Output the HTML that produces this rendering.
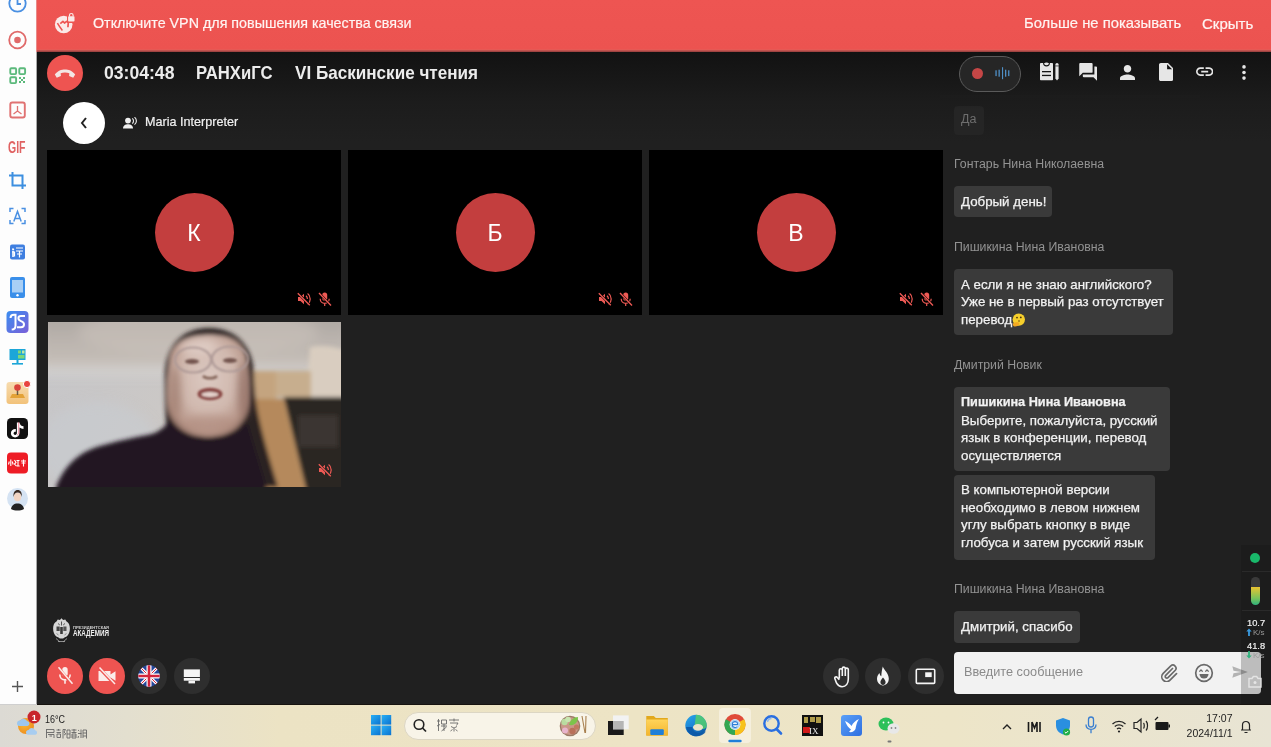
<!DOCTYPE html>
<html><head><meta charset="utf-8">
<style>
*{margin:0;padding:0;box-sizing:border-box}
html,body{width:1271px;height:747px;overflow:hidden;background:#1e1e1e;font-family:"Liberation Sans",sans-serif;-webkit-font-smoothing:antialiased}
body{will-change:transform}
.a{position:absolute}
#side{left:0;top:0;width:37px;height:704px;background:#fdfdfd;border-right:1px solid #a8a8a8}
#banner{left:37px;top:0;width:1234px;height:52px;background:linear-gradient(#ee5552 0,#ec5350 49px,#e0605a 50px,#a04442 51px,#a04442 52px);color:#fff4f2;box-shadow:0 1px 0 #1e0a0a}
#hdr{left:37px;top:52px;width:1234px;height:99px;background:linear-gradient(#121212 0px,#161616 20px,#1c1c1c 50px,#202020 90px)}
#main{left:37px;top:151px;width:1234px;height:553px;background:#202020}
#task{left:0;top:704px;width:1271px;height:43px;background:linear-gradient(90deg,#dcdad4 0%,#e3dfcf 10%,#ece3c4 22%,#ede4c5 50%,#ede5c8 75%,#e8e4d4 100%);border-top:1px solid #17130f}
#tline{left:0;top:704px;width:37px;height:1px;background:#cfcfcf}
.tile{background:#000}
.av{width:79px;height:79px;border-radius:50%;background:#c33e3e;color:#fff;font-size:23px;text-align:center;line-height:81px}
.btn{width:36px;height:36px;border-radius:50%}
.red{background:#ee5451}
.gr{background:#2e2e2e}
.nm{font-size:12.3px;color:#939393;white-space:nowrap}
.bub{background:#3a3a3a;border-radius:4px;color:#f2f2f2;font-size:13.3px;line-height:17.5px;-webkit-text-stroke:0.25px #f2f2f2}
</style></head><body>
<div id="side" class="a"></div>
<svg class="a" style="left:0;top:0" width="37" height="705" viewBox="0 0 37 705">
<g fill="none" stroke-width="1.8">
<circle cx="17.5" cy="3.5" r="8.2" stroke="#4a90e2"/><path d="M17.5 -1v5h3.5" stroke="#4a90e2"/>
<circle cx="17.5" cy="40" r="8.3" stroke="#e06a6a"/>
</g>
<circle cx="17.5" cy="40" r="3.3" fill="#e06a6a"/>
<g fill="none" stroke="#5bb97b" stroke-width="1.9"><rect x="10.3" y="68.3" width="5.8" height="5.8" rx="1"/><rect x="19.3" y="68.3" width="5.8" height="5.8" rx="1"/><rect x="10.3" y="77.3" width="5.8" height="5.8" rx="1"/></g>
<g fill="#5bb97b"><rect x="19" y="77" width="2" height="2"/><rect x="23" y="77" width="2" height="2"/><rect x="21" y="79" width="2" height="2"/><rect x="19" y="81" width="2" height="2"/><rect x="23" y="81" width="2" height="2"/></g>
<rect x="10.3" y="102.5" width="14.5" height="15" rx="2" fill="none" stroke="#e07272" stroke-width="1.9"/>
<path d="M17.5 106v5M17.5 111l-4 3M17.5 111l4 3" stroke="#e07272" stroke-width="1.3" fill="none"/>
<text x="8" y="152.5" font-family="Liberation Sans" font-weight="700" font-size="16.8" fill="#e06262" textLength="17.5" lengthAdjust="spacingAndGlyphs">GIF</text>
<path d="M12.5 172v13.5H26M9 175.5h13.5V189" stroke="#3d8fe0" stroke-width="2" fill="none"/>
<path d="M10 212v-3.5h3.5M21.5 208.5H25v3.5M25 220v3.5h-3.5M13.5 223.5H10V220" stroke="#4a90e2" stroke-width="1.5" fill="none"/>
<path d="M13.8 221.5l3.7-10 3.7 10M15 218.5h5" stroke="#4a90e2" stroke-width="1.5" fill="none"/>
<rect x="10" y="244.5" width="15" height="15" rx="2" fill="#3f7fe0"/>
<text x="11.5" y="257" font-family="Liberation Sans" font-weight="700" font-size="11" fill="#fff">i</text>
<path d="M12.5 248.5l1.5 1.2M12 252h2.5v4.5M16 248h7M16 251h7M17 254h5M19.5 251v6.5" stroke="#fff" stroke-width="1.2" fill="none"/>
<rect x="10" y="277" width="15" height="21" rx="2" fill="#3a8fea"/>
<rect x="12" y="280" width="11" height="12.5" fill="#a9cff5"/>
<circle cx="17.5" cy="295.3" r="1.2" fill="#fff"/>
<defs><linearGradient id="jsg" x1="0" y1="0" x2="1" y2="1"><stop offset="0" stop-color="#3a8ef0"/><stop offset="1" stop-color="#7b5fd8"/></linearGradient>
<linearGradient id="joy" x1="0" y1="0" x2="0" y2="1"><stop offset="0" stop-color="#f7dcb0"/><stop offset="1" stop-color="#f2c27a"/></linearGradient></defs>
<rect x="6.5" y="311" width="22" height="22" rx="4" fill="url(#jsg)"/>
<path d="M10.5 318c0-2 1.6-3.3 3.5-3.3h1.5v11c0 2.4-1.5 3.8-3.8 3.8M25 316h-4c-1.7 0-2.6 1-2.6 2.3 0 1.5 1 2.2 2.6 2.8 1.8 0.7 3 1.6 3 3.2 0 1.6-1.2 3-3 3H17" stroke="#fff" stroke-width="2" fill="none"/>
<rect x="9.5" y="349" width="16" height="11" fill="#1ca6d8"/>
<rect x="18" y="350.5" width="3" height="3" fill="#7dd87a"/><rect x="22" y="350.5" width="2.5" height="3" fill="#bfe8a0"/><rect x="18" y="355" width="6.5" height="3.5" fill="#7dd87a"/>
<rect x="16.5" y="360" width="2" height="3" fill="#1ca6d8"/><rect x="12" y="363" width="11" height="1.6" fill="#1ca6d8"/>
<rect x="6.5" y="382" width="22" height="22" rx="3" fill="url(#joy)"/>
<path d="M10 398l2-4h11l2 4z" fill="#e3a237"/>
<path d="M17.5 388v7" stroke="#6a5a45" stroke-width="1.5"/>
<circle cx="17.5" cy="387.5" r="3.3" fill="#d9433a"/>
<circle cx="27" cy="384" r="3.6" fill="#e8433f" stroke="#fff" stroke-width="1"/>
<rect x="7" y="418" width="21" height="21" rx="4.5" fill="#111"/>
<path d="M19.5 422.5c0.4 2.3 1.8 3.6 4 3.8v2.6c-1.5 0-2.8-0.4-4-1.3v5.5c0 2.7-2.1 4.4-4.4 4.4s-4.2-1.9-4.2-4.2c0-2.6 2.2-4.5 4.9-4.2v2.7c-1.2-0.3-2.2 0.5-2.2 1.5 0 0.9 0.7 1.6 1.6 1.6 1 0 1.7-0.7 1.7-1.8v-10.6z" fill="#fff"/>
<path d="M18.7 422.2v10.8c0 1.1-0.7 1.8-1.7 1.8" stroke="#e8345a" stroke-width="0.8" fill="none" opacity="0.7"/>
<rect x="7" y="452.5" width="21" height="21" rx="4" fill="#ee1c25"/>
<g stroke="#fff" stroke-width="1.1" fill="none"><path d="M10.8 459.5v6.5M9.3 461.5l-0.8 3M12.3 461.5l0.8 3M14.5 460l1.5 2.5-1.5 1.5 1.8 2M16.5 460.5h3M18 460.5v5.5M16.5 466h3.2M21 461h5M23.5 459.5v7M21.5 463h4"/></g>
<circle cx="17.5" cy="498.5" r="10.5" fill="#d5e3f3"/>
<path d="M11 509c0.5-3.5 3-5.5 6.5-5.5s6 2 6.5 5.5c-2 1.2-4 1.6-6.5 1.6s-4.5-0.4-6.5-1.6z" fill="#222"/>
<ellipse cx="17.5" cy="497" rx="3.6" ry="4.3" fill="#f2d4c2"/>
<path d="M13.5 497c-0.5-4.5 1.5-7 4.2-7s4.7 2.3 4 7c-0.4-2.5-1.5-4.5-4-4.5s-3.8 2-4.2 4.5z" fill="#3a2a22"/>
<path d="M12 686.5h11M17.5 681v11" stroke="#555" stroke-width="1.4"/>
</svg>
<div class="a" style="left:36px;top:0;width:1px;height:52px;background:#e88a88"></div>
<div id="banner" class="a">
<svg class="a" style="left:17px;top:12px" width="22" height="22" viewBox="0 0 22 22">
<circle cx="9.7" cy="12.5" r="8.8" fill="#fbeae8"/>
<path d="M6.3 11.6l2.6-2.2 1.6 1.6 2.2-1.6 1.6 1.2-0.4 4.6" stroke="#ee5451" stroke-width="1.7" fill="none" stroke-linejoin="round"/>
<path d="M3.4 11.2c1.4 2.4 3 4.8 5 7.2" stroke="#ee5451" stroke-width="1.5" fill="none"/>
<rect x="13" y="0" width="9" height="11" fill="#ee5451"/>
<rect x="14.1" y="4.2" width="6.4" height="5.3" rx="0.8" fill="#fbeae8"/>
<path d="M15.5 4.6V3.3a1.8 1.8 0 0 1 3.6 0v1.3" stroke="#fbeae8" stroke-width="1.2" fill="none"/>
</svg>
<div class="a" style="left:56px;top:15px;font-size:14.3px;white-space:nowrap;-webkit-text-stroke:0.2px #fff4f2">Отключите VPN для повышения качества связи</div>
<div class="a" style="left:987px;top:15px;font-size:14.8px;white-space:nowrap;-webkit-text-stroke:0.2px #fff4f2">Больше не показывать</div>
<div class="a" style="left:1165px;top:15px;font-size:15px;white-space:nowrap;-webkit-text-stroke:0.2px #fff4f2">Скрыть</div>
</div>
<div id="hdr" class="a"></div>
<div class="a" style="left:104px;top:63px;font-size:17.6px;font-weight:700;color:#ececec;white-space:nowrap">03:04:48</div>
<div class="a" style="left:196px;top:63px;font-size:16.7px;transform-origin:0 0;transform:scaleY(1.06);font-weight:700;color:#ececec;white-space:nowrap">РАНХиГС</div>
<div class="a" style="left:295px;top:63px;font-size:17.1px;transform-origin:0 0;transform:scaleY(1.04);font-weight:700;color:#ececec;white-space:nowrap">VI Баскинские чтения</div>

<div id="main" class="a"></div>
<div id="task" class="a"></div><div id="tline" class="a"></div>
<svg class="a" style="left:0;top:705px" width="1271" height="42" viewBox="0 0 1271 42">
<defs>
<radialGradient id="sun" cx="0.4" cy="0.4" r="0.7"><stop offset="0" stop-color="#f7b733"/><stop offset="1" stop-color="#ee8a1e"/></radialGradient>
<linearGradient id="win" x1="0" y1="0" x2="1" y2="1"><stop offset="0" stop-color="#2ab0f5"/><stop offset="1" stop-color="#0a72d0"/></linearGradient>
<linearGradient id="fold" x1="0" y1="0" x2="0" y2="1"><stop offset="0" stop-color="#ffd45a"/><stop offset="1" stop-color="#f3b52e"/></linearGradient>
<linearGradient id="edge" x1="0" y1="0" x2="0.6" y2="1"><stop offset="0" stop-color="#2aa8e8"/><stop offset="0.6" stop-color="#1a7fd4"/><stop offset="1" stop-color="#0c59a4"/></linearGradient>
<linearGradient id="bird" x1="0" y1="0" x2="1" y2="1"><stop offset="0" stop-color="#5aa0f8"/><stop offset="1" stop-color="#2f6fe0"/></linearGradient>
</defs>
<!-- weather -->
<circle cx="26" cy="21" r="8" fill="url(#sun)"/>
<path d="M17 18.5a3 3 0 0 1 3-3 4 4 0 0 1 7 0.5 2.6 2.6 0 0 1 0.5 5.1H19a2.4 2.4 0 0 1-2-2.6z" fill="#9cc7ee"/>
<path d="M26 27.5a2.6 2.6 0 0 1 2.6-2.6 3.6 3.6 0 0 1 6.5 0.4 2.3 2.3 0 0 1 0.3 4.5H28a2.2 2.2 0 0 1-2-2.3z" fill="#a8cdf0"/>
<circle cx="34" cy="12" r="6.5" fill="#c8262c"/>
<text x="31.8" y="15.8" font-family="Liberation Sans" font-weight="700" font-size="9" fill="#fff">1</text>
<text x="45" y="18" font-family="Liberation Sans" font-size="10.5" fill="#1e1e1e" textLength="20" lengthAdjust="spacingAndGlyphs">16°C</text>
<g stroke="#666" stroke-width="0.9" fill="none">
<path d="M46 24.5h8v3h-7.5M46.5 24.5v8.5M48 29.5h6v3.5M49.5 31h2.5"/>
<path d="M56.5 25h4M58.5 24v1.5M56.5 27.5h4.5M57 29h3.5v3.5H57zM63 24.5v9M63 24.5h2.5l-1.5 2.5 1.8 2-1.8 1"/>
<path d="M67 25h3v8h-3zM67 29h3M71.5 25h5M74 24v3.5M71.5 27.5h5M72 29h4v4h-4zM72 31h4"/>
<path d="M78 25l1.2 1M81 24.5v8.5M78 28.5h3.5M78.5 31l-0.5 2M83 25h3.5v8.5M83 28h3.5M83 31h3.5M83 25v8"/>
</g>
<!-- start -->
<g fill="url(#win)"><rect x="371" y="10" width="9.6" height="9.6"/><rect x="381.6" y="10" width="9.6" height="9.6"/><rect x="371" y="20.6" width="9.6" height="9.6"/><rect x="381.6" y="20.6" width="9.6" height="9.6"/></g>
<!-- search -->
<rect x="404.5" y="7.5" width="191" height="27" rx="13.5" fill="#f8f4e8" stroke="#dcd6c4" stroke-width="1"/>
<circle cx="419" cy="19.5" r="4.8" fill="none" stroke="#222" stroke-width="1.6"/><path d="M422.5 23l3.5 3.5" stroke="#222" stroke-width="1.7"/>
<g stroke="#6a6a6a" stroke-width="0.9" fill="none"><path d="M437 16h3M438.5 14v12M437 21l3-1.5M441.5 15h5v4h-5zM441 21h6M444 19v7M441.5 26l5-4"/><path d="M449 15h10M454 13.5v3M450 18h8l-1.5 2.5M451 21.5l3 1.5 3-1.5M454 23v3.5M450.5 26l2-1.5M457.5 26l-2-1.5"/></g>
<circle cx="570" cy="21" r="10.3" fill="#9a7a66"/><circle cx="570" cy="21" r="9" fill="#c99888"/>
<circle cx="564.5" cy="17" r="3.2" fill="#b9dca0"/><circle cx="568" cy="14.5" r="2.8" fill="#c8e6b0"/><path d="M569 20c1-5 5-8 9-8 0 5-3 9-9 8z" fill="#7cc44a"/>
<circle cx="565" cy="25.5" r="3" fill="#e8b4cc"/><circle cx="572.5" cy="26" r="3.2" fill="#b8705a"/><circle cx="576.5" cy="22" r="2.6" fill="#c07a60"/>
<path d="M582 11l3 17M586 11l-0.5 17" stroke="#a88050" stroke-width="1.1"/>
<!-- task view -->
<rect x="608" y="16" width="15.7" height="14" fill="#1a1a1a"/><rect x="613" y="10.4" width="15.7" height="13.9" fill="#f2f2f2"/><rect x="613" y="16" width="10.7" height="8.3" fill="#b5b5b5"/>
<!-- explorer -->
<path d="M646.3 11h7.5l2 2h12v17.6h-21.5z" fill="#e2a81c"/><rect x="646.3" y="14.5" width="21.5" height="16.1" fill="url(#fold)"/><rect x="650.3" y="24.3" width="13.5" height="5.6" rx="1" fill="#1f7fd8"/>
<!-- edge -->
<circle cx="696" cy="20.5" r="10.7" fill="url(#edge)"/>
<path d="M696 9.8a10.7 10.7 0 0 1 10.7 10.7c0 2.5-2 3.6-4.6 3.6h-8" fill="#53cf6c" opacity="0.85"/>
<ellipse cx="698" cy="22.3" rx="5" ry="3.4" fill="#ece4c8"/>
<path d="M686 22c1 6 5.5 9.3 10.5 9.3 4 0 7.5-1.8 9.6-5-2.5 1.5-5 2-7.5 1.6-3.5-0.5-6-2.5-6.5-6" fill="#0c58a6" opacity="0.9"/>
<!-- chrome highlight -->
<rect x="719" y="3" width="32" height="35" rx="4" fill="#f6f1e1" opacity="0.85"/>
<rect x="728.3" y="34.8" width="13.4" height="2.4" rx="1.2" fill="#1f7fd8"/>
<circle cx="735" cy="19.5" r="10.5" fill="#e04a3a"/>
<path d="M735 19.5L725.9 14.2A10.5 10.5 0 0 0 735 30z" fill="#33a852"/>
<path d="M735 19.5V30a10.5 10.5 0 0 0 9.1-15.8z" fill="#f7c21a"/>
<circle cx="735" cy="19.5" r="5.4" fill="#fff"/><circle cx="735" cy="19.5" r="4.4" fill="#eaf3fc" stroke="#6fb0ea" stroke-width="0.8"/><path d="M732.2 19.6h5.6c0-1.8-1.2-3-2.8-3s-2.8 1.3-2.8 3 1.2 3 2.8 3c1 0 1.8-0.4 2.4-1.1" stroke="#2f7fd8" stroke-width="1.1" fill="none"/>
<!-- search blue -->
<circle cx="771.5" cy="18.5" r="7.2" fill="none" stroke="#2a6fe0" stroke-width="2.4"/><path d="M776.5 24l4.5 4.5" stroke="#2a6fe0" stroke-width="2.6" stroke-linecap="round"/>
<path d="M767.5 17a4.2 4.2 0 0 1 4-3.5" stroke="#8fb8f0" stroke-width="1.4" fill="none"/>
<!-- game -->
<rect x="802" y="10" width="21" height="21" fill="#111"/><rect x="803" y="22" width="7" height="6" fill="#d21a1a"/><text x="809" y="29" font-family="Liberation Serif" font-size="9" fill="#eee">IX</text><path d="M804 12h4v6h-4zM810 12h5v5h-5zM816 12h5v6h-5z" fill="#d8c05a" opacity="0.8"/>
<!-- bird -->
<rect x="841" y="10" width="21" height="21" rx="3" fill="url(#bird)"/><path d="M845 16c3 1 5 3 6.5 5 1.5-3 4-5.5 7.5-7-2 3-3 6.5-3.5 10-1 2.5-3.5 3.5-6.5 3l2-2.5c-2.5-1.5-4.5-4.5-6-8.5z" fill="#fff"/>
<!-- wechat -->
<ellipse cx="886" cy="19" rx="7.5" ry="6.5" fill="#2dc05a"/><ellipse cx="893.5" cy="23.5" rx="6" ry="5.2" fill="#e8e8e8"/><circle cx="891.5" cy="23" r="0.9" fill="#888"/><circle cx="895.5" cy="23" r="0.9" fill="#888"/><circle cx="883.5" cy="17.5" r="0.9" fill="#fff"/><circle cx="888.5" cy="17.5" r="0.9" fill="#fff"/>
<rect x="887.5" y="35.5" width="4" height="2" rx="1" fill="#777"/>
<!-- tray -->
<path d="M1003 24l4-4 4 4" stroke="#222" stroke-width="1.4" fill="none"/>
<path d="M1028.5 17v10M1032 17l2.5 6 2.5-6M1032 17v10M1037 17v10M1040 17v10" stroke="#1a1a1a" stroke-width="1.6" fill="none"/>
<path d="M1063 13l7 2.5v5c0 4.5-3 7.5-7 9-4-1.5-7-4.5-7-9v-5z" fill="#2a8fe0"/><circle cx="1066.5" cy="27" r="3.6" fill="#1fae4a"/><path d="M1064.8 27l1.2 1.2 2.2-2.2" stroke="#fff" stroke-width="1" fill="none"/>
<rect x="1088.5" y="12" width="5" height="10" rx="2.5" fill="none" stroke="#3a7fd0" stroke-width="1.3"/><path d="M1086 19.5c0 3 2.2 4.8 5 4.8s5-1.8 5-4.8M1091 24.3v4" stroke="#3a7fd0" stroke-width="1.3" fill="none"/>
<path d="M1112.5 19a9.5 9.5 0 0 1 13 0M1114.8 21.5a6.2 6.2 0 0 1 8.4 0M1117 24a3 3 0 0 1 4 0" stroke="#222" stroke-width="1.3" fill="none"/><circle cx="1119" cy="26.5" r="1.1" fill="#222"/>
<path d="M1134 17.5h3l4-3.5v13l-4-3.5h-3z" fill="none" stroke="#222" stroke-width="1.2"/><path d="M1143.5 18c1 1 1 4.5 0 5.5M1146 16c2 2 2 7.5 0 9.5" stroke="#222" stroke-width="1.2" fill="none"/>
<rect x="1155.5" y="17" width="13" height="8" rx="1" fill="#1a1a1a"/><rect x="1168.5" y="19.5" width="1.5" height="3" fill="#1a1a1a"/><path d="M1155 15l3-3" stroke="#1a1a1a" stroke-width="1.3"/>
<text x="1232.5" y="16.5" font-family="Liberation Sans" font-size="10.5" fill="#222" text-anchor="end">17:07</text>
<text x="1232.5" y="31.5" font-family="Liberation Sans" font-size="10.5" fill="#222" text-anchor="end">2024/11/1</text>
<path d="M1241 25h10M1242.5 25v-5a3.5 3.5 0 0 1 7 0v5M1244.5 27.5h3" stroke="#222" stroke-width="1.2" fill="none"/>
</svg>

<!-- header right -->
<div class="a" style="left:959px;top:56px;width:62px;height:36px;border-radius:18px;background:#262626;border:1px solid #5a5a5a"></div>
<div class="a" style="left:972px;top:68px;width:11px;height:11px;border-radius:50%;background:#c54646"></div>
<svg class="a" style="left:995px;top:67px" width="15" height="13" viewBox="0 0 15 13"><g fill="#4f8fc6"><rect x="0.4" y="3.3" width="1.3" height="5.8"/><rect x="3.5" y="2.7" width="1.3" height="7"/><rect x="7" y="0.2" width="1.1" height="12"/><rect x="10" y="2.7" width="1.3" height="7"/><rect x="13.1" y="3.3" width="1.3" height="5.8"/></g></svg>
<svg class="a" style="left:1039px;top:62px" width="21" height="20" viewBox="0 0 21 20"><rect x="1" y="1" width="13" height="17.2" rx="0.8" fill="#e6e6e6"/><path d="M4.6 1a2.9 2.9 0 0 0 5.8 0" stroke="#161616" stroke-width="1.1" fill="none"/><ellipse cx="7.5" cy="1.6" rx="1.9" ry="1.2" fill="#e6e6e6"/><rect x="3" y="9" width="9" height="1.3" fill="#161616"/><rect x="3" y="12.8" width="9" height="1.3" fill="#161616"/><path d="M16.4 2.6a1.6 1.6 0 0 1 3.2 0v13.8L18 18.4l-1.6-2z" fill="#e6e6e6"/><rect x="16.2" y="3.6" width="3.6" height="0.7" fill="#161616"/></svg>
<svg class="a" style="left:1079px;top:63px" width="18.3" height="17.8" viewBox="2 2 20 20"><path d="M21 6h-2v9H6v2c0 .55.45 1 1 1h11l4 4V7c0-.55-.45-1-1-1zm-4 6V3c0-.55-.45-1-1-1H3c-.55 0-1 .45-1 1v14l4-4h10c.55 0 1-.45 1-1z" fill="#e6e6e6"/></svg>
<svg class="a" style="left:1119.5px;top:64.5px" width="15" height="15" viewBox="4 4 16 16"><path d="M12 12c2.21 0 4-1.790 4-4s-1.79-4-4-4-4 1.79-4 4 1.79 4 4 4zm0 2c-2.67 0-8 1.34-8 4v2h16v-2c0-2.66-5.33-4-8-4z" fill="#e6e6e6"/></svg>
<svg class="a" style="left:1159px;top:63px" width="14.4" height="18" viewBox="4 2 16 20"><path d="M6 2c-1.1 0-1.99.9-1.99 2L4 20c0 1.1.89 2 1.99 2H18c1.1 0 2-.9 2-2V8l-6-6H6zm7 7V3.5L18.5 9H13z" fill="#e6e6e6"/></svg>
<svg class="a" style="left:1196px;top:67.4px" width="17.4" height="9.2" viewBox="2 7 20 10"><path d="M3.9 12c0-1.71 1.39-3.1 3.1-3.1h4V7H7c-2.76 0-5 2.240-5 5s2.24 5 5 5h4v-1.9H7c-1.71 0-3.1-1.39-3.1-3.1zM8 13h8v-2H8v2zm9-6h-4v1.9h4c1.71 0 3.1 1.39 3.1 3.1s-1.39 3.1-3.1 3.1h-4V17h4c2.76 0 5-2.24 5-5s-2.24-5-5-5z" fill="#e6e6e6"/></svg>
<svg class="a" style="left:1240.5px;top:64.5px" width="6" height="15" viewBox="0 0 6 15"><circle cx="3" cy="1.9" r="1.8" fill="#e6e6e6"/><circle cx="3" cy="7.5" r="1.8" fill="#e6e6e6"/><circle cx="3" cy="13.1" r="1.8" fill="#e6e6e6"/></svg>
<!-- tiles -->
<div class="a tile" style="left:47px;top:150px;width:294px;height:165px"></div>
<div class="a tile" style="left:348px;top:150px;width:294px;height:165px"></div>
<div class="a tile" style="left:649px;top:150px;width:294px;height:165px"></div>
<svg class="a" style="left:48px;top:322px" width="293" height="165" viewBox="0 0 293 165">
<defs>
<filter id="bl" x="-20%" y="-20%" width="140%" height="140%"><feGaussianBlur stdDeviation="2"/></filter>
<filter id="bl4" x="-20%" y="-20%" width="140%" height="140%"><feGaussianBlur stdDeviation="1.1"/></filter>
<filter id="bl3" x="-50%" y="-50%" width="200%" height="200%"><feGaussianBlur stdDeviation="4"/></filter>
<filter id="bl2" x="-20%" y="-20%" width="140%" height="140%"><feGaussianBlur stdDeviation="6"/></filter>
<linearGradient id="ceil" x1="0" y1="0" x2="0" y2="1"><stop offset="0" stop-color="#aaa49f"/><stop offset="0.6" stop-color="#bdb6b0"/><stop offset="1" stop-color="#c6bfb8"/></linearGradient>
<linearGradient id="wall" x1="0" y1="0" x2="1" y2="0.3"><stop offset="0" stop-color="#c6c6c9"/><stop offset="0.5" stop-color="#cbc8c6"/><stop offset="1" stop-color="#bcb6b0"/></linearGradient>
<radialGradient id="face" cx="0.5" cy="0.42" r="0.62"><stop offset="0" stop-color="#dcc9c1"/><stop offset="0.55" stop-color="#d0b8ae"/><stop offset="0.85" stop-color="#b8978a"/><stop offset="1" stop-color="#8a6a5e"/></radialGradient>
</defs>
<rect width="293" height="165" fill="url(#wall)"/>
<g filter="url(#bl2)">
<rect x="-10" y="-10" width="313" height="55" fill="url(#ceil)"/>
<ellipse cx="150" cy="10" rx="120" ry="25" fill="#c9c2bb" opacity="0.6"/>
<rect x="-10" y="45" width="313" height="7" fill="#dad8d6" opacity="0.8"/>
<ellipse cx="50" cy="125" rx="60" ry="45" fill="#c8cbd0" opacity="0.6"/>
</g>
<g filter="url(#bl)">
<path d="M262 25c10-2 22-1 30 2l10 0v48h-44z" fill="#d9cdc0"/>
<path d="M227 49h36v26h-36z" fill="#c7ae8e"/>
<path d="M198 49h30v28h-30z" fill="#c4a47f"/>
<path d="M198 77h38l24 98h-62z" fill="#b5895b"/>
<path d="M236 75h67v100h-43l-24-99z" fill="#2b2623"/>
<path d="M250 93h40v32h-40z" fill="#3a3633"/>
<path d="M117 60c-2-32 14-54 44-54 30 0 46 22 45 52 1 30 10 60 24 107h-28l-20-30-62-10c-2-20-3-40-3-65z" fill="#2c2321"/>
<path d="M162 13c-22 0-38 8-40 24-2 14-3 32-2 46 1 12 6 20 14 25 8 5 17 7 26 7s18-2 26-7c8-5 13-13 14-25 1-14 0-32-2-46-2-16-14-24-36-24z" fill="url(#face)"/>
<path d="M8 175v-10c8-20 22-36 48-42 18-5 32-8 44-10 10-2 16-7 22-15 6 10 18 19 39 19 18 0 30-8 38-16 6 22 14 46 22 75z" fill="#201720"/>
</g>
<g filter="url(#bl3)">
<ellipse cx="127" cy="70" rx="6" ry="26" fill="#9c7a6c" opacity="0.7"/>
<ellipse cx="196" cy="68" rx="6" ry="28" fill="#8c6a5e" opacity="0.7"/>
<ellipse cx="162" cy="102" rx="26" ry="9" fill="#b08c7e" opacity="0.6"/>
<ellipse cx="150" cy="25" rx="18" ry="8" fill="#e6d6cf" opacity="0.6"/>
</g>
<g filter="url(#bl4)" opacity="0.95">
<ellipse cx="145" cy="38" rx="18" ry="12.5" fill="none" stroke="#ad9996" stroke-width="2.2"/>
<ellipse cx="182" cy="37" rx="18" ry="12.5" fill="none" stroke="#ad9996" stroke-width="2.2"/>
<path d="M163 36h1" stroke="#ad9996" stroke-width="3"/>
<ellipse cx="144" cy="39.5" rx="7" ry="2.6" fill="#6e5049"/>
<ellipse cx="182" cy="38.5" rx="7" ry="2.6" fill="#6e5049"/>
<path d="M155 54c3 3 11 3 14 0" stroke="#7f5e53" stroke-width="2.6" fill="none"/>
<ellipse cx="162" cy="72" rx="12.5" ry="6.2" fill="#86423f"/>
<ellipse cx="162" cy="72.5" rx="8.5" ry="2.4" fill="#e6d3cd"/>

</g>
</svg>
<svg class="a" style="left:318px;top:463px" width="14" height="15" viewBox="0 0 14 15"><path d="M1 5h2.5L7 1.8v10.4L3.5 9H1z" fill="#ef5a55"/><path d="M9 3.8c1 0.8 1.4 1.9 1.4 3.2M10.6 1.6c1.8 1.3 2.6 3.2 2.6 5.4s-0.8 4.1-2.6 5.4" stroke="#ef5a55" stroke-width="1.2" fill="none"/><path d="M0.8 1.2l12 12" stroke="#2a2522" stroke-width="2.4"/><path d="M0.8 1.2l12 12" stroke="#ef5a55" stroke-width="1.3"/></svg>

<div class="a av" style="left:154.5px;top:193px">К</div>
<div class="a av" style="left:455.5px;top:193px">Б</div>
<div class="a av" style="left:756.5px;top:193px">В</div>

<svg class="a" style="left:297px;top:292px" width="14" height="15" viewBox="0 0 14 15"><path d="M1 5h2.5L7 1.8v10.4L3.5 9H1z" fill="#ef5a55"/><path d="M9 3.8c1 0.8 1.4 1.9 1.4 3.2M10.6 1.6c1.8 1.3 2.6 3.2 2.6 5.4s-0.8 4.1-2.6 5.4" stroke="#ef5a55" stroke-width="1.2" fill="none"/><path d="M0.8 1.2l12 12" stroke="#000" stroke-width="2.4"/><path d="M0.8 1.2l12 12" stroke="#ef5a55" stroke-width="1.3"/></svg><svg class="a" style="left:318px;top:292px" width="14" height="15" viewBox="0 0 14 15"><rect x="4.2" y="0.6" width="5" height="8.2" rx="2.5" fill="#ef5a55"/><path d="M2.2 6.8c0 2.7 2 4.6 4.5 4.6s4.5-1.9 4.5-4.6M6.7 11.4v2.5" stroke="#ef5a55" stroke-width="1.2" fill="none"/><path d="M1 1l12 12.5" stroke="#000" stroke-width="2.4"/><path d="M1 1l12 12.5" stroke="#ef5a55" stroke-width="1.3"/></svg>
<svg class="a" style="left:598px;top:292px" width="14" height="15" viewBox="0 0 14 15"><path d="M1 5h2.5L7 1.8v10.4L3.5 9H1z" fill="#ef5a55"/><path d="M9 3.8c1 0.8 1.4 1.9 1.4 3.2M10.6 1.6c1.8 1.3 2.6 3.2 2.6 5.4s-0.8 4.1-2.6 5.4" stroke="#ef5a55" stroke-width="1.2" fill="none"/><path d="M0.8 1.2l12 12" stroke="#000" stroke-width="2.4"/><path d="M0.8 1.2l12 12" stroke="#ef5a55" stroke-width="1.3"/></svg><svg class="a" style="left:619px;top:292px" width="14" height="15" viewBox="0 0 14 15"><rect x="4.2" y="0.6" width="5" height="8.2" rx="2.5" fill="#ef5a55"/><path d="M2.2 6.8c0 2.7 2 4.6 4.5 4.6s4.5-1.9 4.5-4.6M6.7 11.4v2.5" stroke="#ef5a55" stroke-width="1.2" fill="none"/><path d="M1 1l12 12.5" stroke="#000" stroke-width="2.4"/><path d="M1 1l12 12.5" stroke="#ef5a55" stroke-width="1.3"/></svg>
<svg class="a" style="left:899px;top:292px" width="14" height="15" viewBox="0 0 14 15"><path d="M1 5h2.5L7 1.8v10.4L3.5 9H1z" fill="#ef5a55"/><path d="M9 3.8c1 0.8 1.4 1.9 1.4 3.2M10.6 1.6c1.8 1.3 2.6 3.2 2.6 5.4s-0.8 4.1-2.6 5.4" stroke="#ef5a55" stroke-width="1.2" fill="none"/><path d="M0.8 1.2l12 12" stroke="#000" stroke-width="2.4"/><path d="M0.8 1.2l12 12" stroke="#ef5a55" stroke-width="1.3"/></svg><svg class="a" style="left:920px;top:292px" width="14" height="15" viewBox="0 0 14 15"><rect x="4.2" y="0.6" width="5" height="8.2" rx="2.5" fill="#ef5a55"/><path d="M2.2 6.8c0 2.7 2 4.6 4.5 4.6s4.5-1.9 4.5-4.6M6.7 11.4v2.5" stroke="#ef5a55" stroke-width="1.2" fill="none"/><path d="M1 1l12 12.5" stroke="#000" stroke-width="2.4"/><path d="M1 1l12 12.5" stroke="#ef5a55" stroke-width="1.3"/></svg>
<!-- chat -->
<div class="a bub" style="left:954px;top:106px;width:30px;height:29px;background:#252525"></div>
<div class="a" style="left:961px;top:112px;font-size:12.5px;color:#6e6e6e">Да</div>
<div class="a" style="left:940px;top:95px;width:260px;height:14px;background:linear-gradient(#1c1c1c,rgba(32,32,32,0))"></div>
<div class="a nm" style="left:954px;top:157px">Гонтарь Нина Николаевна</div>
<div class="a bub" style="left:954px;top:186px;width:98px;height:31px;padding:7px 0 0 7px">Добрый день!</div>
<div class="a nm" style="left:954px;top:240px">Пишикина Нина Ивановна</div>
<div class="a bub" style="left:954px;top:269px;width:219px;height:66px;padding:6.5px 0 0 7px">А если я не знаю английского?<br>Уже не в первый раз отсутствует<br>перевод<svg style="vertical-align:-3px" width="13" height="14" viewBox="0 0 13 14"><circle cx="6.8" cy="6.6" r="6.2" fill="#f6cf2c"/><circle cx="5" cy="4.6" r="0.9" fill="#4a3510"/><circle cx="8.8" cy="4.4" r="0.9" fill="#4a3510"/><path d="M6 8h2" stroke="#6a4a10" stroke-width="0.9"/><path d="M1 10.5c1.5-1 3.5-1.5 5-1.2 1.2 0.3 1.8 1.4 1 2.4-1 1.3-3 2-4.5 1.8-1.3-0.2-2-1.8-1.5-3z" fill="#f3a922"/></svg></div>
<div class="a nm" style="left:954px;top:358px">Дмитрий Новик</div>
<div class="a bub" style="left:954px;top:387px;width:216px;height:84px;padding:6px 0 0 7px"><b style="font-size:12.7px">Пишикина Нина Ивановна</b><br>Выберите, пожалуйста, русский<br>язык в конференции, перевод<br>осуществляется</div>
<div class="a bub" style="left:954px;top:475px;width:201px;height:85px;padding:6px 0 0 7px">В компьютерной версии<br>необходимо в левом нижнем<br>углу выбрать кнопку в виде<br>глобуса и затем русский язык</div>
<div class="a nm" style="left:954px;top:582px">Пишикина Нина Ивановна</div>
<div class="a bub" style="left:954px;top:611px;width:126px;height:32px;padding:7px 0 0 7px">Дмитрий, спасибо</div>
<div class="a" style="left:954px;top:652px;width:307px;height:42px;background:#f2f2f2;border-radius:4px;overflow:hidden">
<div class="a" style="left:10px;top:13px;font-size:12.7px;color:#8a8a8a;white-space:nowrap">Введите сообщение</div>
<svg class="a" style="left:205px;top:10px" width="20" height="20" viewBox="0 0 20 20"><path d="M13.5 6.5l-6.8 6.8a1.6 1.6 0 0 0 2.3 2.3l7.3-7.3a3.2 3.2 0 0 0-4.5-4.5L4.2 11.4a4.8 4.8 0 0 0 6.8 6.8l6.5-6.5" stroke="#6a6a6a" stroke-width="1.7" fill="none" stroke-linecap="round"/></svg>
<svg class="a" style="left:240px;top:11px" width="20" height="20" viewBox="0 0 20 20"><circle cx="10" cy="10" r="8.3" stroke="#6a6a6a" stroke-width="1.7" fill="none"/><path d="M5.3 8.6l1.7-1.6 1.7 1.6M11.3 8.6l1.7-1.6 1.7 1.6" stroke="#6a6a6a" stroke-width="1.3" fill="none"/><path d="M5.5 11h9a4.5 4.5 0 0 1-9 0z" fill="#6a6a6a"/></svg>
<svg class="a" style="left:277.5px;top:14px" width="16" height="12" viewBox="0 0 16 12"><path d="M0.3 0.3L15.8 6 0.3 11.7 1.5 7.2 9 6 1.5 4.8z" fill="#b3b3b3"/></svg>

</div>
<!-- net overlay -->
<div class="a" style="left:1241px;top:545px;width:30px;height:107px;background:rgba(0,0,0,0.12)"></div>
<div class="a" style="left:1241px;top:652px;width:20px;height:42px;background:rgba(0,0,0,0.22);border-radius:0 4px 4px 0"></div>
<div class="a" style="left:1261px;top:652px;width:10px;height:52px;background:rgba(0,0,0,0.12)"></div>
<div class="a" style="left:1241px;top:694px;width:20px;height:10px;background:rgba(0,0,0,0.12)"></div>


<div class="a" style="left:1250px;top:553px;width:10px;height:10px;border-radius:50%;background:#19b86a"></div>
<div class="a" style="left:1242px;top:571px;width:29px;height:1px;background:#2a2a2a"></div>
<div class="a" style="left:1251px;top:577px;width:9px;height:28px;border-radius:5px;background:linear-gradient(#3a3a3a 0 36%,#e9c431 36%,#7cc45a 75%,#2fb37d 100%)"></div>
<div class="a" style="left:1242px;top:610px;width:29px;height:1px;background:#2a2a2a"></div>
<div class="a" style="left:1247px;top:618px;font-size:9.3px;color:#f0f0f0;line-height:10px;-webkit-text-stroke:0.2px #f0f0f0">10.7</div>
<div class="a" style="left:1246px;top:628px;font-size:8px;color:#9a9a9a;line-height:10px"><svg style="vertical-align:-1px;margin-right:1px" width="6" height="8" viewBox="0 0 6 8"><path d="M3 0.5L0.3 3.5h1.8V8h1.8V3.5h1.8z" fill="#3a9be0"/></svg>K/s</div>
<div class="a" style="left:1247px;top:641px;font-size:9.3px;color:#f0f0f0;line-height:10px;-webkit-text-stroke:0.2px #f0f0f0">41.8</div>
<!-- controls -->
<div class="a btn red" style="left:47px;top:55px;width:36px;height:36px"><svg class="a" style="left:7px;top:11.5px" width="22" height="13" viewBox="0 0 20 12"><path d="M0.6 7C3.2 3.2 6.8 2.2 10 2.2s6.8 1 9.4 4.8l-1.8 2.9-3.8-1.6 0.2-2.6c-1.2-0.4-2.5-0.6-4-0.6s-2.8 0.2-4 0.6l0.2 2.6-3.8 1.6z" fill="#f3e6e4"/></svg></div>
<div class="a" style="left:63px;top:102px;width:42px;height:42px;border-radius:50%;background:#fff"><svg class="a" style="left:16px;top:14px" width="10" height="14" viewBox="0 0 10 14"><path d="M7 2L3 7l4 5" stroke="#222" stroke-width="2" fill="none"/></svg></div>
<svg class="a" style="left:123px;top:117px" width="14" height="12" viewBox="0 0 14 12"><circle cx="5" cy="3.6" r="2.9" fill="#f0f0f0"/><path d="M0 11.5c0-2.8 2.4-4.2 5-4.2s5 1.4 5 4.2z" fill="#f0f0f0"/><path d="M9.3 1.3c0.9 0.8 1.2 1.6 1.2 2.6s-0.3 1.8-1.2 2.6M11.5 0.2c1.3 1.1 1.9 2.3 1.9 3.7s-0.6 2.6-1.9 3.7" stroke="#f0f0f0" stroke-width="1.1" fill="none"/></svg>
<div class="a" style="left:145px;top:115px;font-size:12.6px;color:#f0f0f0;white-space:nowrap;-webkit-text-stroke:0.2px #f0f0f0">Maria Interpreter</div>
<div class="a btn red" style="left:47px;top:658px"><svg class="a" style="left:9px;top:8px" width="18" height="20" viewBox="0 0 18 20"><rect x="6.3" y="1" width="5.4" height="9.5" rx="2.7" fill="#fbecea"/><path d="M3.8 8.6c0 3.1 2.3 5.3 5.2 5.3s5.2-2.2 5.2-5.3M9 13.9v3.8" stroke="#fbecea" stroke-width="1.6" fill="none"/><path d="M2 1.5l14 16.5" stroke="#ee5451" stroke-width="3"/><path d="M2.5 1.3l14 16.5" stroke="#fbecea" stroke-width="1.5"/></svg></div>
<div class="a btn red" style="left:89px;top:658px"><svg class="a" style="left:8px;top:9px" width="20" height="18" viewBox="0 0 20 18"><path d="M1.5 4h12v10h-12zM13.5 7.5l5-3.2v9.4l-5-3.2z" fill="#fbecea"/><path d="M2 0.8l15.5 16.5" stroke="#ee5451" stroke-width="3"/><path d="M2.5 0.5l15.5 16.5" stroke="#fbecea" stroke-width="1.5"/></svg></div>
<div class="a btn gr" style="left:131px;top:658px"><svg class="a" style="left:7px;top:7px" width="22" height="22" viewBox="0 0 22 22"><defs><clipPath id="fc"><circle cx="11" cy="11" r="10.7"/></clipPath></defs><g clip-path="url(#fc)"><rect width="22" height="22" fill="#2a4a9a"/><rect width="22" height="22" fill="#26479a"/><path d="M0 0L22 22M22 0L0 22" stroke="#fff" stroke-width="3"/><path d="M0 0L22 22M22 0L0 22" stroke="#d3243b" stroke-width="1"/><path d="M11 0v22M0 11h22" stroke="#fff" stroke-width="5"/><path d="M11 0v22M0 11h22" stroke="#d3243b" stroke-width="2.6"/></g></svg></div>
<div class="a btn gr" style="left:174px;top:658px"><svg class="a" style="left:0;top:0" width="36" height="36" viewBox="0 0 36 36"><rect x="9.8" y="11.4" width="16.1" height="7.6" fill="#f5f5f5"/><rect x="9.8" y="20" width="16.1" height="2.7" fill="#f5f5f5"/><rect x="14.5" y="22.7" width="6.5" height="2.7" fill="#f5f5f5"/></svg></div>
<div class="a btn gr" style="left:823px;top:658px"><svg class="a" style="left:10.5px;top:7.5px" width="18" height="22" viewBox="0 0 18 22"><path d="M5.3 12.5V4.2a1.5 1.5 0 0 1 3 0V10M8.3 10V2.6a1.5 1.5 0 0 1 3 0V10M11.3 10V3.6a1.5 1.5 0 0 1 3 0v9.5c0 4.4-2.3 7.6-6.2 7.6-2.6 0-4.2-1.3-5.5-3.5L0.9 12.8a1.4 1.4 0 0 1 2.4-1.4l2 2.4" stroke="#f5f5f5" stroke-width="1.6" fill="none" stroke-linejoin="round"/></svg></div>
<div class="a btn gr" style="left:865px;top:658px"><svg class="a" style="left:11px;top:8px" width="14" height="20" viewBox="0 0 14 20"><path d="M6.8 0.5C7.8 4 12.8 7 12.8 12.8c0 3.8-2.6 6.6-5.8 6.6S1 16.6 1 12.8C1 10 2.5 8 3.5 7c0.2 1.5 0.8 2.6 1.8 3.2C5.5 6.4 6 3.3 6.8 0.5z" fill="#f5f5f5"/><path d="M7 11.5c-1.5 1.6-2.6 3.2-2.6 4.8 0 1.6 1.2 2.8 2.6 2.8s2.6-1.2 2.6-2.8c0-1.6-1.1-3.2-2.6-4.8z" fill="#2e2e2e"/></svg></div>
<div class="a btn gr" style="left:908px;top:658px"><svg class="a" style="left:7px;top:10px" width="21" height="17" viewBox="0 0 21 17"><rect x="1.3" y="1.2" width="18.4" height="14.2" rx="1" stroke="#f5f5f5" stroke-width="1.6" fill="none"/><rect x="10.2" y="4.3" width="6.5" height="4.8" fill="#f5f5f5"/></svg></div>
<!-- logo -->
<svg class="a" style="left:52px;top:617px" width="60" height="27" viewBox="0 0 60 27">
<path d="M9.5 1.2l1.6 1.8 2.2-0.6 1 1.8c2.4 1.2 3.6 4 3.6 7.4 0 3.6-1.2 6.6-3.6 8.2l-1.4 0.4-1.8 1.4h-3.2l-1.8-1.4-1.4-0.4C2.3 18.2 1.1 15.2 1.1 11.6c0-3.4 1.2-6.2 3.6-7.4l1-1.8 2.2 0.6z" fill="#d6d6d6"/>
<path d="M6 6.5l1.8 1.5M13 6.5l-1.8 1.5M9.5 4.5v4" stroke="#555" stroke-width="1" fill="none"/>
<rect x="4.5" y="9.5" width="3.2" height="4.5" fill="#444"/><rect x="11.3" y="9.5" width="3.2" height="4.5" fill="#555"/>
<path d="M8.2 10h2.6v7h-2.6z" fill="#3a3a3a"/>
<path d="M4.5 16.5l2 1.5M14.5 16.5l-2 1.5" stroke="#777" stroke-width="0.8"/>
<path d="M4 21.5l4 3.5M15 21.5l-4 3.5M6 24.5h7" stroke="#aaa" stroke-width="1" fill="none" opacity="0.8"/>
<text x="21" y="11.8" font-family="Liberation Sans" font-weight="700" font-size="3.6" fill="#d0d0d0" textLength="36" lengthAdjust="spacingAndGlyphs">ПРЕЗИДЕНТСКАЯ</text>
<text x="21" y="19" font-family="Liberation Sans" font-weight="700" font-size="8.2" fill="#f0f0f0" textLength="36" lengthAdjust="spacingAndGlyphs">АКАДЕМИЯ</text></svg>
<div class="a" style="left:1246px;top:651px;font-size:8px;color:#9a9a9a;line-height:10px"><svg style="vertical-align:-1px;margin-right:1px" width="6" height="8" viewBox="0 0 6 8"><path d="M3 7.5L0.3 4.5h1.8V0h1.8v4.5h1.8z" fill="#2fb37d"/></svg>K/s</div>
<svg class="a" style="left:1248px;top:675px" width="14" height="13" viewBox="0 0 14 13"><path d="M1 3.5h3l1.3-2h3.4l1.3 2h3v8.5H1z" fill="none" stroke="#e4e4e4" stroke-width="1.4"/><circle cx="7" cy="7.6" r="1.5" fill="#e4e4e4"/></svg>
</body></html>
